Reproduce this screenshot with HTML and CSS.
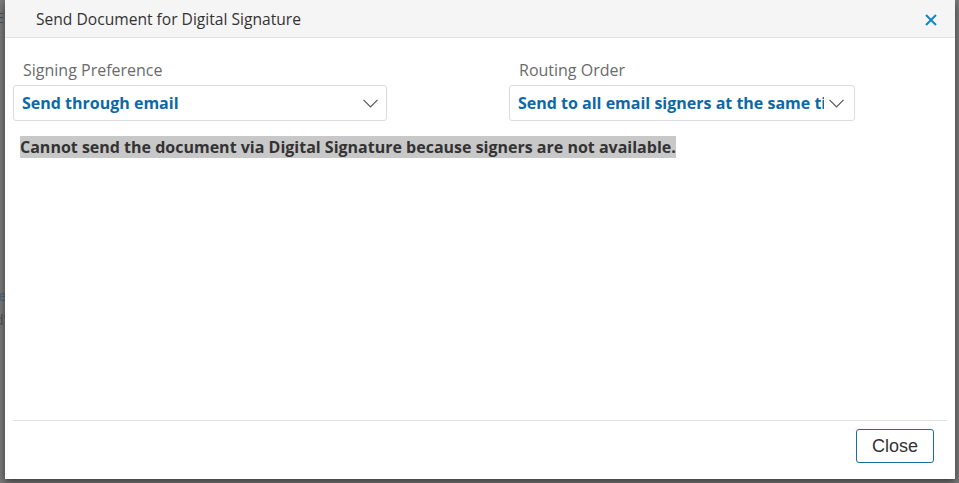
FILE: index.html
```html
<!DOCTYPE html>
<html lang="en">
<head>
<meta charset="utf-8">
<title>Send Document for Digital Signature</title>
<link rel="stylesheet" href="styles.css">
</head>
<body>
<div class="backdrop">
  <div class="page-behind">
    <span class="frag frag-1">E</span>
    <span class="frag frag-2">le</span>
    <span class="frag frag-3">d'</span>
  </div>
</div>
<div class="modal">
  <div class="modal-header">
    <h1 class="modal-title">Send Document for Digital Signature</h1>
    <button class="icon-close" aria-label="Close">
      <svg width="12" height="12" viewBox="0 0 12 12"><path d="M1 1L11 11M11 1L1 11" stroke="#1584c3" stroke-width="2" fill="none"/></svg>
    </button>
  </div>
  <div class="modal-body">
    <div class="row">
      <div class="field field-1">
        <label class="field-label">Signing Preference</label>
        <div class="select">
          <span class="select-value">Send through email</span>
          <svg class="chevron" width="15" height="9" viewBox="0 0 15 9"><path d="M0.5 0.8L7.5 7.8L14.5 0.8" stroke="#555" stroke-width="1.2" fill="none"/></svg>
        </div>
      </div>
      <div class="field field-2">
        <label class="field-label">Routing Order</label>
        <div class="select">
          <span class="select-value">Send to all email signers at the same time</span>
          <svg class="chevron" width="15" height="9" viewBox="0 0 15 9"><path d="M0.5 0.8L7.5 7.8L14.5 0.8" stroke="#555" stroke-width="1.2" fill="none"/></svg>
        </div>
      </div>
    </div>
    <p class="message"><span class="message-text">Cannot send the document via Digital Signature because signers are not available.</span></p>
  </div>
  <div class="modal-footer">
    <button class="btn-close">Close</button>
  </div>
</div>
</body>
</html>
```
FILE: styles.css
```css
* { box-sizing: border-box; }
html, body { margin: 0; padding: 0; }
body {
  width: 959px;
  height: 483px;
  overflow: hidden;
  background: #7b7b7b;
  font-family: "Open Sans", "Noto Sans", sans-serif;
  position: relative;
}
.backdrop { position: absolute; inset: 0; }
.page-behind { position: relative; width: 100%; height: 100%; }
.frag {
  position: absolute;
  font-size: 14px;
  color: #3a3f46;
  opacity: .55;
}
.frag-1 { left: -4px; top: 8px; color: #22303c; }
.frag-2 { left: -5px; top: 286px; color: #2a5a8a; }
.frag-3 { left: -5px; top: 310px; color: #333; }

.modal {
  position: absolute;
  left: 5px;
  top: 0;
  width: 950px;
  height: 479px;
  background: #fff;
  display: flex;
  flex-direction: column;
  box-shadow: 0 3px 8px rgba(0,0,0,.55);
}
.modal-header {
  height: 38px;
  background: #f5f5f5;
  border-bottom: 1px solid #e2e2e2;
  display: flex;
  align-items: center;
  justify-content: space-between;
  padding: 0 18px 0 31px;
}
.modal-title {
  margin: 0;
  font-size: 15.6px;
  font-weight: 500;
  color: #333;
}
.icon-close {
  border: 0;
  background: none;
  padding: 0;
  width: 12px;
  height: 12px;
  display: flex;
  margin-top: 2px;
}
.modal-body {
  flex: 1;
  padding: 21px 8px 0 8px;
}
.row { display: flex; }
.field { display: flex; flex-direction: column; }
.field-1 { width: 374px; }
.field-2 { width: 346px; margin-left: 122px; }
.field-label {
  font-size: 16px;
  line-height: 22px;
  color: #6b6b6b;
  padding-left: 10px;
  margin-bottom: 4px;
}
.select {
  height: 36px;
  border: 1px solid #dcdcdc;
  border-radius: 3px;
  display: flex;
  align-items: center;
  padding-left: 8px;
  padding-right: 10px;
}
.field-1 .select { padding-left: 8px; padding-right: 8px; }
.select-value {
  flex: 1;
  min-width: 0;
  overflow: hidden;
  white-space: nowrap;
  font-size: 16px;
  font-weight: 700;
  color: #0c69a6;
}
.field-2 .select-value { margin-right: 5px; }
.chevron { flex: none; }
.message {
  margin: 15px 0 0 7px;
  font-size: 16px;
  line-height: 22px;
  font-weight: 700;
  color: #333;
}
.message-text { background: #c8c8c8; }
.modal-footer {
  margin: 0 8px;
  border-top: 1px solid #e2e2e2;
  height: 59px;
  display: flex;
  justify-content: flex-end;
  align-items: flex-start;
  padding: 8px 13px 0 0;
}
.btn-close {
  width: 78px;
  height: 34px;
  border: 1px solid #1d6c9e;
  border-radius: 3px;
  background: #fff;
  font-family: "Liberation Sans", Arial, sans-serif;
  font-size: 18px;
  color: #333;
  padding: 0;
}
```
